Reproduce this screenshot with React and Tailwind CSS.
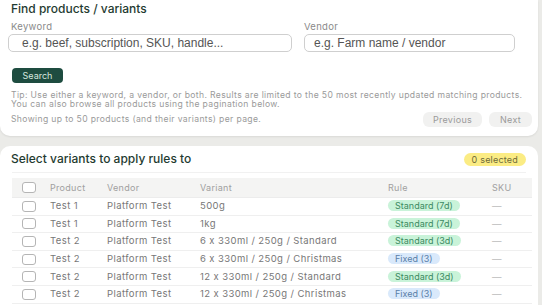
import React from "react";

const rows = [
  { product: "Test 1", vendor: "Platform Test", variant: "500g", rule: "Standard (7d)", kind: "std" },
  { product: "Test 1", vendor: "Platform Test", variant: "1kg", rule: "Standard (7d)", kind: "std" },
  { product: "Test 2", vendor: "Platform Test", variant: "6 x 330ml / 250g / Standard", rule: "Standard (3d)", kind: "std" },
  { product: "Test 2", vendor: "Platform Test", variant: "6 x 330ml / 250g / Christmas", rule: "Fixed (3)", kind: "fixed" },
  { product: "Test 2", vendor: "Platform Test", variant: "12 x 330ml / 250g / Standard", rule: "Standard (3d)", kind: "std" },
  { product: "Test 2", vendor: "Platform Test", variant: "12 x 330ml / 250g / Christmas", rule: "Fixed (3)", kind: "fixed" },
];

function Checkbox() {
  return <span className="block w-[14px] h-[11px] rounded-[3px] border border-[#b5b5b5] bg-white" />;
}

function RuleBadge({ rule, kind }) {
  return (
    <span
      className={
        kind === "std"
          ? "inline-flex items-center h-[11px] px-[7px] rounded-full bg-[#c9f3d9] text-[#3c8a62] text-[9px] leading-none"
          : "inline-flex items-center h-[11px] px-[7px] rounded-full bg-[#d9e9fb] text-[#5a7fa8] text-[9px] leading-none"
      }
    >
      {rule}
    </span>
  );
}

export default function App() {
  return (
    <div className="w-[542px] h-[305px] overflow-hidden bg-[#ebebe8] font-['Inter',sans-serif]">
      {/* search card */}
      <div className="mr-[4px] bg-white rounded-b-[10px] shadow-[0_1px_2px_rgba(0,0,0,0.08)] px-[11px] pt-[1px] h-[136px]">
        <h2 className="text-[12px] leading-[16px] font-medium tracking-normal text-[#1f3b31]">
          Find products / variants
        </h2>
        <div className="flex gap-[12px] mt-[4px] -ml-[3px]">
          <div className="w-[284px]">
            <div className="text-[9.5px] leading-[12px] tracking-[0.3px] text-[#8a8a8a] ml-[3px]">Keyword</div>
            <div className="mt-[1px] h-[18px] rounded-[5px] border border-[#cfcfcf] flex items-center pl-[13px] font-['Liberation_Sans',sans-serif] text-[12px] text-[#555]">
              e.g. beef, subscription, SKU, handle...
            </div>
          </div>
          <div className="w-[211px]">
            <div className="text-[9.5px] leading-[12px] tracking-[0.3px] text-[#8a8a8a]">Vendor</div>
            <div className="mt-[1px] h-[18px] rounded-[5px] border border-[#cfcfcf] flex items-center pl-[9px] font-['Liberation_Sans',sans-serif] text-[12px] text-[#555]">
              e.g. Farm name / vendor
            </div>
          </div>
        </div>
        <button className="mt-[16px] ml-[1px] w-[51px] h-[15px] rounded-[4px] bg-[#1e4c40] text-[#d7e6df] text-[9px] leading-none flex items-center justify-center">
          Search
        </button>
        <p className="mt-[8px] text-[8.6px] leading-[9px] tracking-[0.36px] text-[#9a9a9a]">
          Tip: Use either a keyword, a vendor, or both. Results are limited to the 50 most recently updated matching products.
          <br />
          You can also browse all products using the pagination below.
        </p>
        <div className="flex items-center justify-between mt-[3px]">
          <span className="text-[8.6px] tracking-[0.36px] text-[#9a9a9a]">Showing up to 50 products (and their variants) per page.</span>
          <div className="flex gap-[7px] mr-[-5px]">
            <span className="w-[59px] h-[15px] rounded-[6px] bg-[#f1f1f0] text-[9px] tracking-[0.3px] text-[#9a9a9a] flex items-center justify-center">Previous</span>
            <span className="w-[43px] h-[15px] rounded-[6px] bg-[#f1f1f0] text-[9px] tracking-[0.3px] text-[#9a9a9a] flex items-center justify-center">Next</span>
          </div>
        </div>
      </div>

      {/* variants card */}
      <div className="mt-[10px] mr-[4px] bg-white rounded-t-[10px] px-[12px] pt-[5px] h-[200px]">
        <div className="flex items-center justify-between">
          <h2 className="text-[12px] leading-[16px] font-medium tracking-normal text-[#1f3b31] -ml-[1px]">
            Select variants to apply rules to
          </h2>
          <span className="h-[13px] px-[8px] rounded-full bg-[#fbec84] text-[9px] leading-none tracking-[0.2px] text-[#6e6a3a] flex items-center">
            0 selected
          </span>
        </div>
        <div className="mt-[5px] border-t border-[#f1f1f1]" />
        <div className="mt-[5px] w-[520px]">
          <div className="flex items-center h-[20px] bg-[#f4f4f3] border-b border-[#ececec] text-[9px] tracking-[0.3px] text-[#a0a0a0]">
            <div className="w-[38px] pl-[10px]"><Checkbox /></div>
            <div className="w-[57px]">Product</div>
            <div className="w-[93px]">Vendor</div>
            <div className="w-[188px]">Variant</div>
            <div className="w-[104px]">Rule</div>
            <div>SKU</div>
          </div>
          {rows.map((r, i) => (
            <div key={i} className="flex items-center h-[17.6px] border-b border-[#efefef] text-[9.5px] tracking-[0.4px] text-[#777]">
              <div className="w-[38px] pl-[10px]"><Checkbox /></div>
              <div className="w-[57px]">{r.product}</div>
              <div className="w-[93px]">{r.vendor}</div>
              <div className="w-[188px]">{r.variant}</div>
              <div className="w-[104px] tracking-normal"><RuleBadge rule={r.rule} kind={r.kind} /></div>
              <div className="text-[#bbb]">—</div>
            </div>
          ))}
        </div>
      </div>
    </div>
  );
}
